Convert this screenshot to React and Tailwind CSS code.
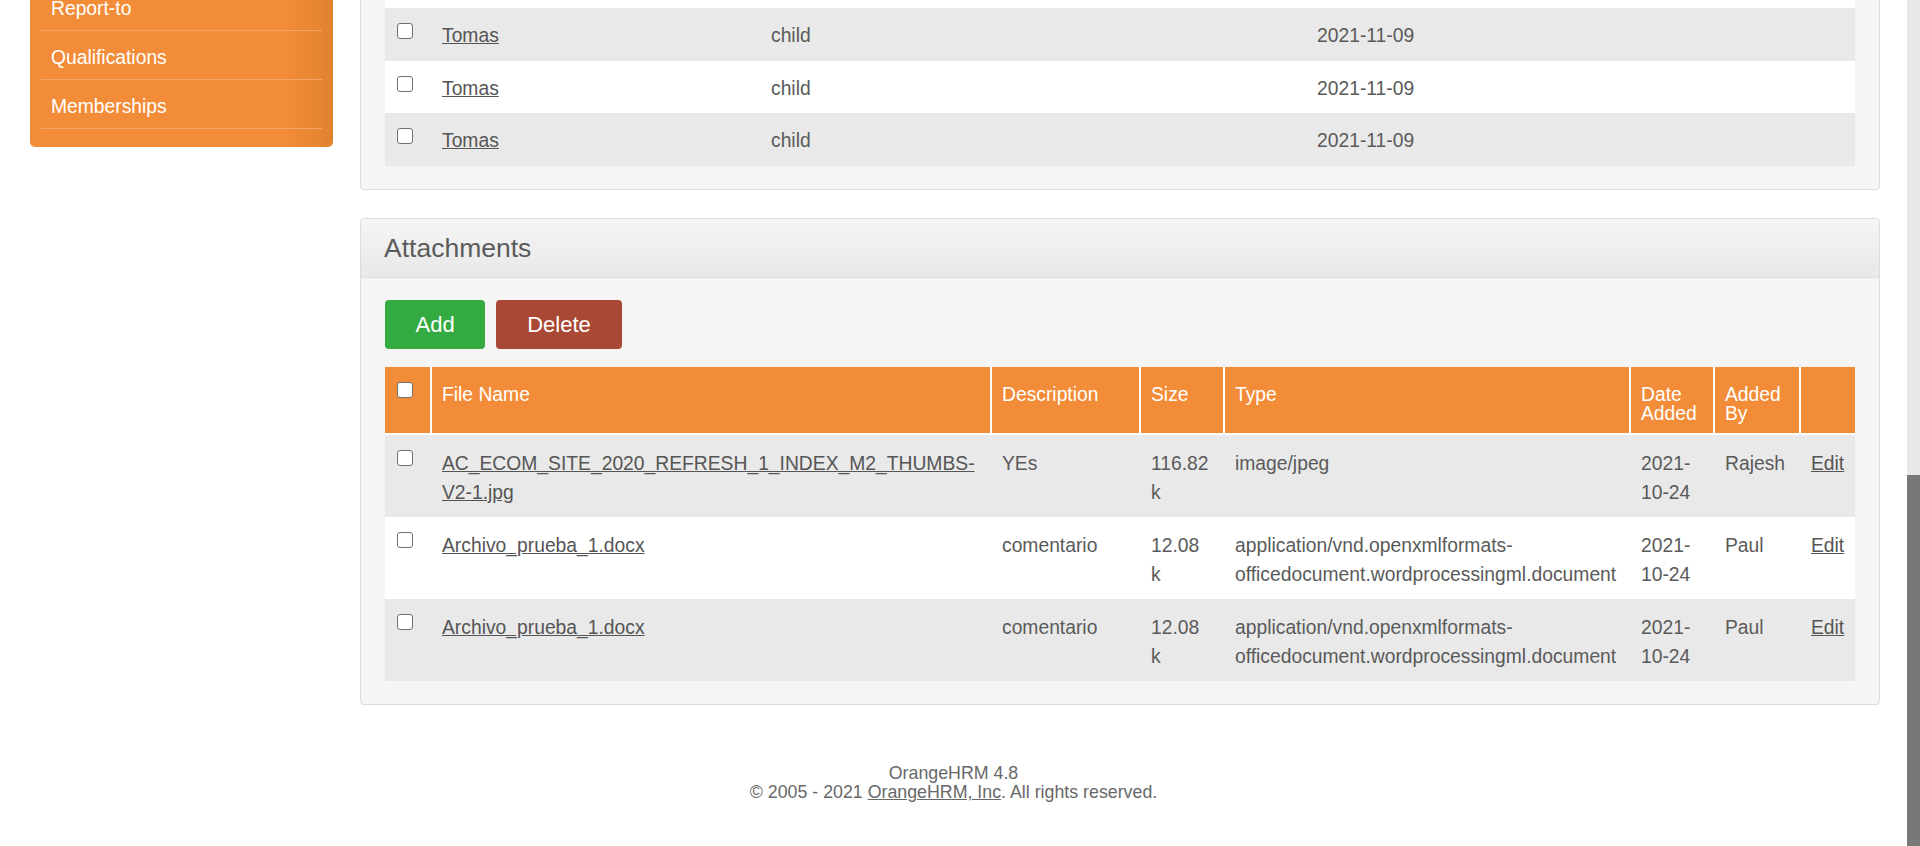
import React from "react";

function Box() {
  return (
    <span className="block w-[16px] h-[16px] border border-[#707070] rounded-[3px] bg-white" />
  );
}

const attachments = [
  {
    file: ["AC_ECOM_SITE_2020_REFRESH_1_INDEX_M2_THUMBS-", "V2-1.jpg"],
    desc: "YEs",
    size: ["116.82", "k"],
    type: ["image/jpeg"],
    date: ["2021-", "10-24"],
    by: "Rajesh",
  },
  {
    file: ["Archivo_prueba_1.docx"],
    desc: "comentario",
    size: ["12.08", "k"],
    type: ["application/vnd.openxmlformats-", "officedocument.wordprocessingml.document"],
    date: ["2021-", "10-24"],
    by: "Paul",
  },
  {
    file: ["Archivo_prueba_1.docx"],
    desc: "comentario",
    size: ["12.08", "k"],
    type: ["application/vnd.openxmlformats-", "officedocument.wordprocessingml.document"],
    date: ["2021-", "10-24"],
    by: "Paul",
  },
];

function Lines({ items }) {
  return items.map((t, i) => (
    <span key={i} className="block">
      {t}
    </span>
  ));
}

export default function App() {
  const td = "align-top border-l-2 border-transparent pl-[10px] pr-[4px]";
  const th = "align-top text-left font-normal pt-[18px] pb-[10px] border-l-2 border-b-2 border-white pl-[10px] pr-[4px]";
  return (
    <div className="h-[846px] overflow-hidden flex bg-white font-['Liberation_Sans',Arial,sans-serif] text-[19.3px] leading-[29px] text-[#5a5a5a]">
      <div className="flex-1 min-w-0 flex flex-col">
        <div className="flex items-start pl-[30px] pr-[27px] gap-[27px]">
          {/* Sidebar */}
          <aside className="w-[303px] shrink-0 -mt-[18px] pb-[18px] px-[11px] rounded-b-[5px] bg-linear-to-r from-[#f28c38] via-[#f28c38] via-85% to-[#e1822f] text-white">
            {["Report-to", "Qualifications", "Memberships"].map((t) => (
              <div
                key={t}
                className="h-[49px] pt-[12px] pl-[10px] border-b border-[#f5a461]"
              >
                {t}
              </div>
            ))}
          </aside>

          {/* Main column */}
          <main className="flex-1 min-w-0">
            {/* Top panel (scrolled) */}
            <section className="-mt-[45.5px] bg-[#f5f5f5] border border-[#dddddd] rounded-[4px] px-[24px] pb-[23px]">
              <div className="h-[52.5px] bg-white" />
              <table className="w-full table-fixed border-separate border-spacing-0">
                <colgroup>
                  <col className="w-[45px]" />
                  <col className="w-[329px]" />
                  <col className="w-[546px]" />
                  <col />
                </colgroup>
                <tbody>
                  {["bg-[#e9e9e9]", "bg-white", "bg-[#e9e9e9]"].map((bg, i) => (
                    <tr key={i} className={bg}>
                      <td className="align-top pt-[14px] pb-[9.5px] pl-[12px]">
                        <span className="block mt-[1px]">
                          <Box />
                        </span>
                      </td>
                      <td className={td + " pt-[13px] pb-[10.5px]"}>
                        <a className="underline text-[#555555]">Tomas</a>
                      </td>
                      <td className={td + " pt-[13px] pb-[10.5px]"}>child</td>
                      <td className={td + " pt-[13px] pb-[10.5px]"}>2021-11-09</td>
                    </tr>
                  ))}
                </tbody>
              </table>
            </section>

            {/* Attachments panel */}
            <section className="mt-[28.5px] bg-[#f5f5f5] border border-[#dddddd] rounded-[4px]">
              <div className="h-[59px] flex items-center pb-[1px] px-[23px] border-b border-[#dddddd] rounded-t-[4px] bg-linear-to-b from-[#f5f5f5] to-[#e8e8e8]">
                <h2 className="text-[26.5px] leading-[30px] font-normal text-[#5b5b5b]">
                  Attachments
                </h2>
              </div>
              <div className="px-[24px] pt-[22px] pb-[23px]">
                <div className="flex gap-[11px]">
                  <button className="h-[49px] px-[30.5px] rounded-[4px] bg-[#33ab40] text-white text-[22px] leading-none">
                    Add
                  </button>
                  <button className="h-[49px] px-[31px] rounded-[4px] bg-[#a94935] text-white text-[22px] leading-none">
                    Delete
                  </button>
                </div>
                <table className="mt-[18px] w-full table-fixed border-separate border-spacing-0">
                  <colgroup>
                    <col className="w-[45px]" />
                    <col className="w-[560px]" />
                    <col className="w-[149px]" />
                    <col className="w-[84px]" />
                    <col className="w-[406px]" />
                    <col className="w-[84px]" />
                    <col className="w-[86px]" />
                    <col />
                  </colgroup>
                  <thead>
                    <tr className="bg-[#f28c38] text-white leading-[19px]">
                      <th className="align-top pt-[15px] pb-[10px] pl-[12px] border-b-2 border-white">
                        <Box />
                      </th>
                      <th className={th}>File Name</th>
                      <th className={th}>Description</th>
                      <th className={th}>Size</th>
                      <th className={th}>Type</th>
                      <th className={th}>
                        <Lines items={["Date", "Added"]} />
                      </th>
                      <th className={th}>
                        <Lines items={["Added", "By"]} />
                      </th>
                      <th className={th}></th>
                    </tr>
                  </thead>
                  <tbody>
                    {attachments.map((r, i) => (
                      <tr key={i} className={i % 2 === 0 ? "bg-[#e9e9e9]" : "bg-white"}>
                        <td className="align-top pt-[14px] pb-[10px] pl-[12px]">
                          <span className="block mt-[1px]">
                            <Box />
                          </span>
                        </td>
                        <td className={td + " pt-[14px] pb-[10px]"}>
                          <a className="underline text-[#555555]">
                            <Lines items={r.file} />
                          </a>
                        </td>
                        <td className={td + " pt-[14px] pb-[10px]"}>{r.desc}</td>
                        <td className={td + " pt-[14px] pb-[10px]"}>
                          <Lines items={r.size} />
                        </td>
                        <td className={td + " pt-[14px] pb-[10px] whitespace-nowrap"}>
                          <Lines items={r.type} />
                        </td>
                        <td className={td + " pt-[14px] pb-[10px]"}>
                          <Lines items={r.date} />
                        </td>
                        <td className={td + " pt-[14px] pb-[10px]"}>{r.by}</td>
                        <td className={td + " pt-[14px] pb-[10px]"}>
                          <a className="underline text-[#555555]">Edit</a>
                        </td>
                      </tr>
                    ))}
                  </tbody>
                </table>
              </div>
            </section>
          </main>
        </div>

        {/* Footer */}
        <footer className="mt-[59px] text-center text-[17.8px] leading-[19px] text-[#686868]">
          <div>OrangeHRM 4.8</div>
          <div>
            © 2005 - 2021 <a className="underline">OrangeHRM, Inc</a>. All rights reserved.
          </div>
        </footer>
      </div>

      {/* Scrollbar */}
      <div className="w-[13px] shrink-0 flex flex-col bg-[#e8e8e8]">
        <div className="h-[475px]" />
        <div className="flex-1 bg-[#787878]" />
      </div>
    </div>
  );
}
